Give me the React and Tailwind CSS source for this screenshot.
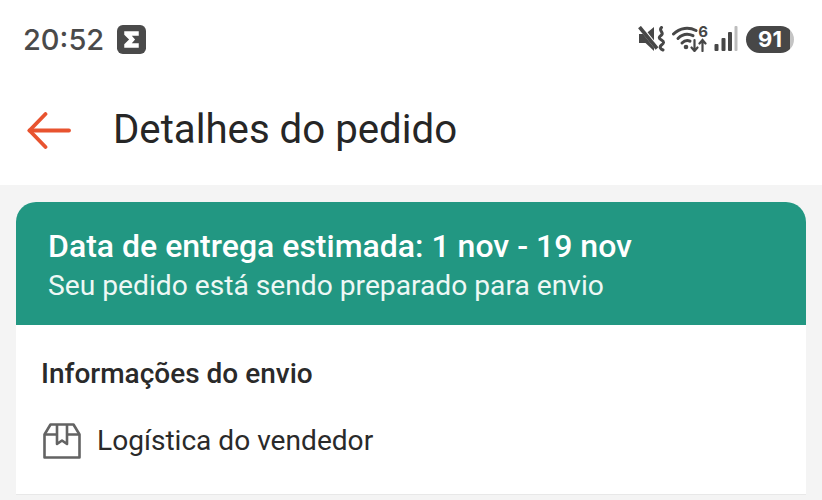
const BackArrow = () => (
    <svg width="44" height="37" viewBox="0 0 44 37" fill="none" stroke="#e8532f" strokeWidth="3.800" strokeLinecap="round" strokeLinejoin="round">
        <path d="M42 18.500H2.500" />
        <path d="M18.500 2L2.500 18.500L18.500 35" />
    </svg>
);

const SigmaLogo = () => (
    <svg width="29" height="29" viewBox="0 0 30 30">
        <rect width="30" height="30" rx="6" fill="#4a4a4a" />
        <path d="M7.500 6.500h15v4.500h-7.200l3.400 4-3.400 4h7.200v4.500h-15v-3.500l5-5-5-5z" fill="#fff" />
    </svg>
);

const MuteIcon = () => (
    <svg width="28" height="26" viewBox="0 0 28 26" fill="#474747">
        <path d="M1 8h6.500L16 1v24L7.500 17H1z" />
        <path d="M2 0.500l16 20" stroke="#fff" strokeWidth="4.500" />
        <path d="M1.500 1l17.500 21.500" stroke="#474747" strokeWidth="3.600" />
        <path d="M23.500 1.500c-3.500 3 3 5 0 7.500s-3 3 0 5 2.500 3 0 5-1 4 1.500 5" stroke="#474747" strokeWidth="3" fill="none" strokeLinecap="round" />
    </svg>
);

const WifiIcon = () => (
    <svg width="36" height="26" viewBox="0 0 36 26" fill="none" stroke="#474747" strokeLinecap="round">
        <path d="M1.500 8C8 1.500 17 1 24 4.500" strokeWidth="3" />
        <path d="M6 12.500c4.500-4.500 10-5 15-2.800" strokeWidth="3" />
        <path d="M10 17c2.500-2.500 5.500-3 8-1.800" strokeWidth="3" />
        <circle cx="14" cy="21" r="2.300" fill="#474747" stroke="none" />
        <path d="M22.500 14v11M19.500 21.500l3 3.500 3-3.500" strokeWidth="2.200" />
        <path d="M30.500 25V14M27.500 17.500l3-3.500 3 3.500" strokeWidth="2.200" />
    </svg>
);

const SignalIcon = () => (
    <svg width="24" height="26" viewBox="0 0 24 26">
        <rect x="0.500" y="18" width="4" height="7" rx="1" fill="#474747" />
        <rect x="7.500" y="12" width="4" height="13" rx="1" fill="#474747" />
        <rect x="14" y="6" width="4" height="19" rx="1" fill="#474747" />
        <rect x="20.500" y="0" width="3" height="25" rx="1" fill="#bdbdbd" />
    </svg>
);

const BoxIcon = () => (
    <svg width="38" height="36" viewBox="0 0 38 36" fill="none" stroke="#636363" strokeWidth="2.600" strokeLinejoin="round">
        <path d="M1.500 11.500V34.500H36.500V11.500L30.500 1.500H7.500z" />
        <path d="M1.500 11.500H14M24 11.500H36.500" />
        <path d="M14 1.500V21L19 17.500L24 21V1.500" />
    </svg>
);

export default function App() {
    return (
        <div className="h-[500px] w-[822px] overflow-hidden bg-[#f4f4f4] font-['Roboto',sans-serif]">
            <div className="h-[185px] bg-white">
                <div className="flex h-[78px] items-center justify-between pl-[23px] pr-[28px]">
                    <div className="flex items-center gap-[13px]">
                        <span className="font-['Inter',sans-serif] text-[29px] font-medium leading-none text-[#4a4a4a]">20:52</span>
                        <SigmaLogo />
                    </div>
                    <div className="flex items-center gap-[6px]">
                        <MuteIcon />
                        <div className="relative">
                            <WifiIcon />
                            <span className="absolute right-0 top-[-2px] font-['Inter',sans-serif] text-[15px] font-bold leading-none text-[#474747]">6</span>
                        </div>
                        <SignalIcon />
                        <div className="ml-[2px] flex h-[27px] w-[48px] items-center justify-center rounded-full bg-[linear-gradient(90deg,#474747_91%,#c4c4c4_91%)] font-['Inter',sans-serif] text-[22px] font-bold leading-none text-white">
                            91
                        </div>
                    </div>
                </div>
                <div className="flex h-[104px] items-center pl-[27px]">
                    <BackArrow />
                    <h1 className="ml-[42px] text-[40.200px] font-normal leading-none text-[#262626]">Detalhes do pedido</h1>
                </div>
            </div>
            <div className="mx-[16px] mt-[17px] overflow-hidden rounded-t-[20px] bg-white">
                <div className="flex h-[123px] flex-col justify-center bg-[#229782] pl-[32px] pt-[5px] text-white">
                    <p className="text-[32px] font-medium leading-[38px]">Data de entrega estimada: 1 nov - 19 nov</p>
                    <p className="text-[28.200px] leading-[41px] text-[#eef8f5]">Seu pedido está sendo preparado para envio</p>
                </div>
                <div className="h-[170px] border-b border-[#e8e8e8] pl-[25px]">
                    <h2 className="pt-[32px] text-[28px] font-medium leading-[34px] text-[#2a2a2a]">Informações do envio</h2>
                    <div className="mt-[32px] flex items-center gap-[16px] pl-[2px]">
                        <BoxIcon />
                        <span className="text-[28.100px] leading-[36px] text-[#2a2a2a]">Logística do vendedor</span>
                    </div>
                </div>
            </div>
        </div>
    );
}
